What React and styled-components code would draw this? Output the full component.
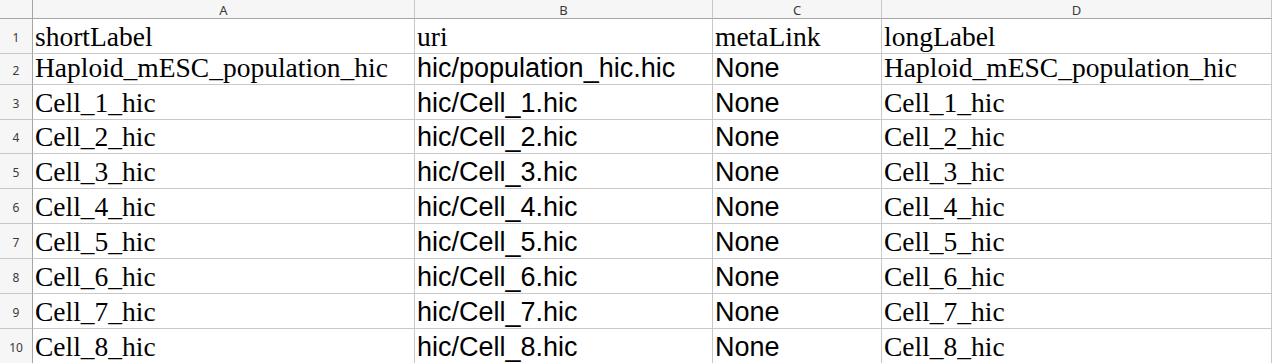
import React from "react";
import styled, { createGlobalStyle } from "styled-components";

const GlobalStyle = createGlobalStyle`
  html, body { margin: 0; padding: 0; background: #ffffff; overflow: hidden; }
  * { box-sizing: border-box; }
`;

const Sheet = styled.div`
  display: grid;
  grid-template-columns: 33px 382px 298px 169px 1fr;
  grid-template-rows: 19px 35px 31px 35px 34px 35px 35px 35px 35px 35px 35px;
  width: 1272px;
  height: 363px;
  overflow: hidden;
  background: #ffffff;
`;

const Corner = styled.div`
  background: #f6f6f6;
  border-right: 1px solid #a6a6a6;
  border-bottom: 1px solid #a6a6a6;
`;

const ColHead = styled.div`
  background: #f6f6f6;
  border-right: 1px solid #c8c8c8;
  border-bottom: 1px solid #a6a6a6;
  display: flex;
  align-items: center;
  justify-content: center;
  font-family: "Noto Sans", "DejaVu Sans", sans-serif;
  font-size: 13px;
  color: #3a3a3a;
  padding-top: 1px;
`;

const RowHead = styled.div`
  background: #f6f6f6;
  border-right: 1px solid #a6a6a6;
  border-bottom: 1px solid #c8c8c8;
  display: flex;
  align-items: center;
  justify-content: center;
  font-family: "Noto Sans", "DejaVu Sans", sans-serif;
  font-size: 12px;
  color: #3a3a3a;
  padding-top: 2px;
`;

const Cell = styled.div`
  border-right: 1px solid #c8c8c8;
  border-bottom: 1px solid #c8c8c8;
  display: flex;
  align-items: flex-end;
  padding: 0 0 2px 2px;
  white-space: nowrap;
  font-family: ${(p) =>
    p.$sans
      ? '"Liberation Sans", Arial, sans-serif'
      : '"Liberation Serif", "Times New Roman", serif'};
  font-size: ${(p) => (p.$sans ? "27px" : "27.5px")};
  line-height: 28px;
  color: #000000;
`;

const columns = ["A", "B", "C", "D"];

const rows = [
  { cells: ["shortLabel", "uri", "metaLink", "longLabel"], header: true },
  { cells: ["Haploid_mESC_population_hic", "hic/population_hic.hic", "None", "Haploid_mESC_population_hic"] },
  ...Array.from({ length: 8 }, (_, i) => ({
    cells: [`Cell_${i + 1}_hic`, `hic/Cell_${i + 1}.hic`, "None", `Cell_${i + 1}_hic`],
  })),
];

export default function App() {
  return (
    <>
      <GlobalStyle />
      <Sheet>
        <Corner />
        {columns.map((c) => (
          <ColHead key={c}>{c}</ColHead>
        ))}
        {rows.map((row, r) => (
          <React.Fragment key={r}>
            <RowHead>{r + 1}</RowHead>
            {row.cells.map((text, c) => (
              <Cell key={c} $sans={!row.header && (c === 1 || c === 2)}>
                {text}
              </Cell>
            ))}
          </React.Fragment>
        ))}
      </Sheet>
    </>
  );
}
